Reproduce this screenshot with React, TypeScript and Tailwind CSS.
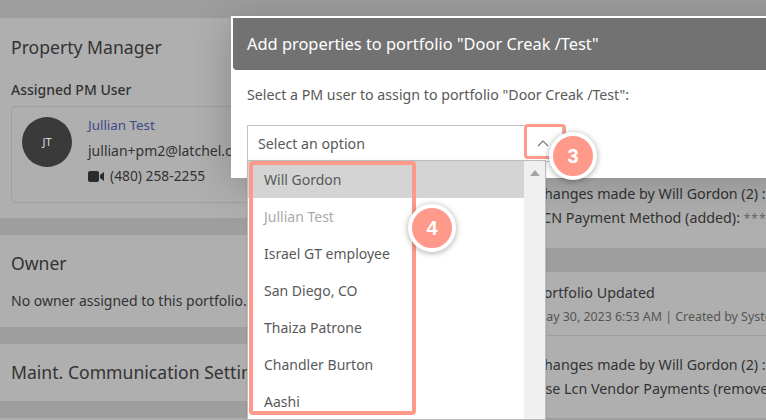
export default function App() {
  const options = ["Jullian Test", "Israel GT employee", "San Diego, CO", "Thaiza Patrone", "Chandler Burton", "Aashi"];
  return (
    <div className="relative flex h-[420px] w-[766px] gap-6 overflow-hidden bg-[#9e9e9e] pt-[18px] font-['Noto_Sans','Open_Sans',sans-serif] text-[#333]">
      {/* left column */}
      <div className="flex w-[499px] shrink-0 flex-col gap-[17px] whitespace-nowrap">
        <section className="h-[200px] shrink-0 bg-[#afafaf] pl-[11px] pt-[16px]">
          <h2 className="text-[17.6px] leading-[26px]">Property Manager</h2>
          <h3 className="mt-[20px] text-[14px] font-medium leading-[20px]">Assigned PM User</h3>
          <div className="mt-[6px] flex h-[97px] w-[300px] gap-4 rounded border border-[#a0a0a0] pl-[10px] pt-[10px]">
            <div className="flex h-[50px] w-[50px] items-center justify-center rounded-full bg-[#3a3a3a] text-[11px] text-[#ddd]">JT</div>
            <div className="-mt-[2px] text-[14px]">
              <div className="h-[25px] text-[13.4px] leading-[20px] text-[#3d4a8a]">Jullian Test</div>
              <div className="h-[24px] leading-[22px]">jullian+pm2@latchel.com</div>
              <div className="flex items-center gap-[6px] text-[13.8px] leading-[24px]">
                <svg width="16" height="11" viewBox="0 0 16 11">
                  <rect x="0" y="0" width="11" height="11" rx="2" fill="#2b2b2b" />
                  <polygon points="12,4 16,1 16,10 12,7" fill="#2b2b2b" />
                </svg>
                <span>(480) 258-2255</span>
              </div>
            </div>
          </div>
        </section>
        <section className="h-[92px] shrink-0 bg-[#afafaf] pl-[11px] pt-[15px]">
          <h2 className="text-[17.6px] leading-[26px]">Owner</h2>
          <p className="mt-[15px] text-[14px] leading-[20px]">No owner assigned to this portfolio.</p>
        </section>
        <section className="h-[57px] shrink-0 bg-[#afafaf] pl-[11px] pt-[15px]">
          <h2 className="text-[17.6px] leading-[26px]">Maint. Communication Settings</h2>
        </section>
        <section className="h-[57px] shrink-0 bg-[#afafaf]" />
      </div>

      {/* right column */}
      <div className="flex flex-1 flex-col gap-6 whitespace-nowrap text-[14.3px] leading-[24px]">
        <section className="flex h-[230px] shrink-0 flex-col justify-end bg-[#afafaf] pb-[17px] pl-[12px]">
          <div>Changes made by Will Gordon (2) :</div>
          <div>
            LCN Payment Method (added): <span className="text-[12px] tracking-[1px] text-[#666]">****</span>
          </div>
        </section>
        <section className="shrink-0 bg-[#afafaf] pl-[12px]">
          <div className="h-[64px] border-b border-[#9f9f9f] pt-[9px]">
            <div>Portfolio Updated</div>
            <div className="text-[12.4px] text-[#555]">May 30, 2023 6:53 AM | Created by System</div>
          </div>
          <div className="h-[83px] border-b border-[#9f9f9f] pt-[17px]">
            <div>Changes made by Will Gordon (2) :</div>
            <div>Use Lcn Vendor Payments (removed)</div>
          </div>
        </section>
      </div>

      {/* modal */}
      <div className="absolute left-[231px] top-[16px] h-[162px] w-[560px] border-l-2 border-t-2 border-white bg-white shadow-[0_6px_40px_rgba(0,0,0,0.22)]">
        <div className="flex h-[52px] items-center rounded-bl bg-[#727272] pb-[-1px] pl-[14px] pt-[1px] text-[16.4px] text-white">
          Add properties to portfolio "Door Creak /Test"
        </div>
        <p className="pl-[14px] pt-[15px] text-[14.2px] leading-[20px] text-[#595959]">
          Select a PM user to assign to portfolio "Door Creak /Test":
        </p>
        <div className="relative ml-[14px] mt-[20px] flex h-[37px] w-[316px] items-center border border-[#c4c4c4] pl-[10px] text-[14.2px] text-[#595959]">
          Select an option
          <svg className="absolute left-[289px] top-[13px]" width="12" height="8" viewBox="0 0 12 8" fill="none" stroke="#777" strokeWidth="1.2">
            <path d="M1 7l5-5 5 5" />
          </svg>
          {/* dropdown */}
          <div className="absolute -left-px top-[34px] flex h-[260px] w-[299px] border border-[#bdbdbd] bg-white shadow-sm">
            <div className="flex-1 text-[14px] text-[#595959]">
              <div className="flex h-[37px] items-center bg-[#d4d4d4] pl-[16px]">Will Gordon</div>
              {options.map((o, i) => (
                <div key={o} className={i === 0 ? "flex h-[37px] items-center pl-[16px] text-[#aaa]" : "flex h-[37px] items-center pl-[16px]"}>
                  {o}
                </div>
              ))}
            </div>
            <div className="flex w-[21px] justify-center bg-[#f0f0f0] pt-[9px]">
              <svg width="10" height="6" viewBox="0 0 10 6">
                <polygon points="5,0 10,6 0,6" fill="#a5a5a5" />
              </svg>
            </div>
          </div>
        </div>
      </div>

      {/* annotations */}
      <div className="absolute left-[524px] top-[124px] h-[35px] w-[42px] rounded-sm border-[3px] border-[#ff9a8b]" />
      <div className="absolute left-[249px] top-[161px] h-[254px] w-[167px] rounded-sm border-4 border-[#ff9a8b]" />
      <div className="absolute left-[549px] top-[132px] flex h-[48px] w-[48px] items-center justify-center rounded-full border-4 border-white bg-[#ff9a8b] font-['Liberation_Sans',sans-serif] text-[20px] font-bold text-white shadow-[0_1px_6px_rgba(0,0,0,0.35)]">3</div>
      <div className="absolute left-[408px] top-[204px] flex h-[48px] w-[48px] items-center justify-center rounded-full border-4 border-white bg-[#ff9a8b] font-['Liberation_Sans',sans-serif] text-[20px] font-bold text-white shadow-[0_1px_6px_rgba(0,0,0,0.35)]">4</div>
    </div>
  );
}
